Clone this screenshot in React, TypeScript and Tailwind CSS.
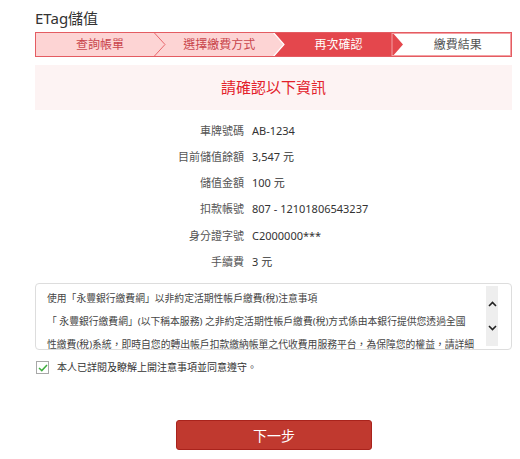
import React from "react";

const steps = [
  { label: "查詢帳單", state: "done" },
  { label: "選擇繳費方式", state: "done" },
  { label: "再次確認", state: "active" },
  { label: "繳費結果", state: "todo" },
];

const rows = [
  ["車牌號碼", "AB-1234"],
  ["目前儲值餘額", "3,547 元"],
  ["儲值金額", "100 元"],
  ["扣款帳號", "807 - 12101806543237"],
  ["身分證字號", "C2000000***"],
  ["手續費", "3 元"],
];

const StepBar: React.FC = () => (
  <div className="relative mt-[4px] h-[25px] w-[477px]">
    {/* chevron background */}
    <svg className="absolute inset-0" width="477" height="25" viewBox="0 0 477 25">
      <polygon points="0,0 249,0 249,25 0,25" fill="#fdd4d4" />
      <polygon points="357,0 477,0 477,25 357,25 368,12.5" fill="#ffffff" />
      <polygon points="238,0 357,0 368,12.5 357,25 238,25 249,12.5" fill="#e4474d" />
      <polyline points="119,0.5 130,12.5 119,24.5" fill="none" stroke="#e8686e" strokeWidth="1" />
      <polyline points="238,0 249,12.5 238,25" fill="none" stroke="#ffffff" strokeWidth="1.2" />
      <rect x="0.5" y="0.5" width="476" height="24" fill="none" stroke="#e45c62" strokeWidth="1" />
      <rect x="357" y="1.5" width="118.5" height="22" fill="none" stroke="#f4a0a3" strokeWidth="1" />
    </svg>
    <div className="relative flex h-full">
      {steps.map((s) => (
        <div
          key={s.label}
          className={
            "flex flex-1 items-center justify-center pl-[11px] text-[12px] " +
            (s.state === "active"
              ? "text-white"
              : s.state === "done"
              ? "text-[#c9464c]"
              : "text-[#555555]")
          }
        >
          {s.label}
        </div>
      ))}
    </div>
  </div>
);

const Chevron: React.FC<{ up?: boolean }> = ({ up }) => (
  <svg width="9" height="6" viewBox="0 0 9 6">
    <polyline
      points={up ? "1,5 4.5,1.5 8,5" : "1,1 4.5,4.5 8,1"}
      fill="none"
      stroke="#222"
      strokeWidth="1.6"
    />
  </svg>
);

export default function App() {
  return (
    <div
      className="min-h-[459px] w-[520px] bg-white pl-[35px]"
      style={{ fontFamily: '"Noto Sans", "Noto Sans CJK TC", sans-serif' }}
    >
      {/* Title */}
      <div className="pt-[8px] text-[15px] leading-[20px] text-[#333333]">ETag儲值</div>

      <StepBar />

      {/* Notice */}
      <div className="mt-[8px] flex h-[45px] w-[477px] items-center justify-center bg-[#fdf3f3] text-[15px] text-[#e3202a]">
        請確認以下資訊
      </div>

      {/* Info rows */}
      <div className="mt-[8px] grid w-[477px] grid-cols-[209px_1fr] gap-x-[8px] text-[11px]">
        {rows.map(([k, v]) => (
          <React.Fragment key={k}>
            <div className="flex h-[26.2px] items-center justify-end text-[#555555]">{k}</div>
            <div className="flex h-[26.2px] items-center text-[#333333]">{v}</div>
          </React.Fragment>
        ))}
      </div>

      {/* Terms box */}
      <div className="mt-[8px] flex h-[67px] w-[477px] rounded-[4px] border border-[#dddddd] bg-white">
        <div className="w-[452px] overflow-hidden pl-[11px] pt-[3px] text-[9.8px] leading-[23px] text-[#444444]">
          <div className="whitespace-nowrap">使用「永豐銀行繳費網」以非約定活期性帳戶繳費(稅)注意事項</div>
          <div className="whitespace-nowrap">「 永豐銀行繳費網」(以下稱本服務) 之非約定活期性帳戶繳費(稅)方式係由本銀行提供您透過全國</div>
          <div className="whitespace-nowrap">性繳費(稅)系統，即時自您的轉出帳戶扣款繳納帳單之代收費用服務平台，為保障您的權益，請詳細</div>
        </div>
        <div className="ml-[-2px] mt-[2px] flex h-[60px] w-[12px] flex-col items-center justify-center gap-[18px] bg-[#eeeeee]">
          <Chevron up />
          <Chevron />
        </div>
      </div>

      {/* Agree */}
      <label className="mt-[10px] flex items-center gap-[8px]">
        <span className="ml-[1px] flex h-[13px] w-[13px] items-center justify-center border border-[#a8a8a8] bg-white">
          <svg width="10" height="8" viewBox="0 0 10 8">
            <polyline points="1,4 3.8,6.6 9,1" fill="none" stroke="#3fae3f" strokeWidth="1.5" />
          </svg>
        </span>
        <span className="text-[10px] text-[#333333]">本人已詳閱及瞭解上開注意事項並同意遵守。</span>
      </label>

      {/* Next */}
      <div className="mt-[45px] pl-[141px]">
        <button className="h-[30px] w-[196px] rounded-[3px] border border-[#a9231c] bg-[#c0392f] text-[14px] text-white">
          下一步
        </button>
      </div>
    </div>
  );
}
